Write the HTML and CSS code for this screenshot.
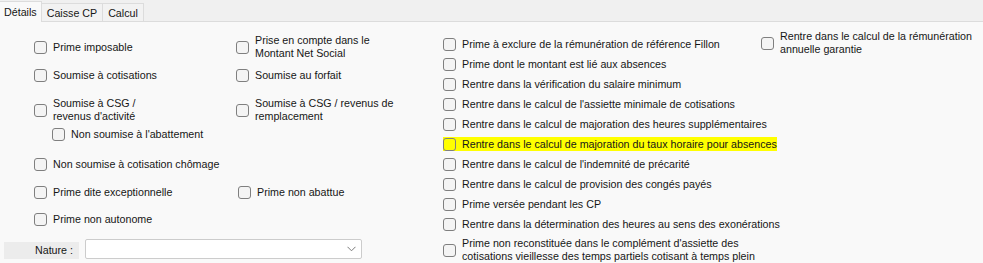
FILE: index.html
```html
<!DOCTYPE html>
<html lang="fr">
  <head>
    <meta charset="UTF-8" />
    <title>Rubrique - Détails</title>
    <link rel="stylesheet" href="styles.css">
  </head>
  <body>
    <div class="tabs">
      <div class="tab active">Détails</div>
      <div class="tab">Caisse CP</div>
      <div class="tab">Calcul</div>
    </div>

    <div class="panel">
      <div class="left">
        <div class="row">
          <label class="check"><span class="box"></span><span>Prime imposable</span></label>
          <label class="check"><span class="box"></span><span>Prise en compte dans le<br>Montant Net Social</span></label>
        </div>
        <div class="row tight">
          <label class="check"><span class="box"></span><span>Soumise à cotisations</span></label>
          <label class="check"><span class="box"></span><span>Soumise au forfait</span></label>
        </div>
        <div class="row wide">
          <label class="check"><span class="box"></span><span>Soumise à CSG /<br>revenus d'activité</span></label>
          <label class="check"><span class="box"></span><span>Soumise à CSG / revenus de<br>remplacement</span></label>
        </div>
        <div class="row sub">
          <label class="check indent"><span class="box"></span><span>Non soumise à l'abattement</span></label>
        </div>
        <div class="row loose">
          <label class="check"><span class="box"></span><span>Non soumise à cotisation chômage</span></label>
        </div>
        <div class="row">
          <label class="check"><span class="box"></span><span>Prime dite exceptionnelle</span></label>
          <label class="check shift"><span class="box"></span><span>Prime non abattue</span></label>
        </div>
        <div class="row close">
          <label class="check"><span class="box"></span><span>Prime non autonome</span></label>
        </div>

        <div class="nature">
          <span class="nature-label">Nature :</span>
          <div class="select">
            <svg width="9" height="6" viewBox="0 0 9 6"><path d="M0.5 0.8 L4.5 4.8 L8.5 0.8" fill="none" stroke="#7a7a7a" stroke-width="1"/></svg>
          </div>
        </div>
      </div>

      <div class="middle">
        <label class="check"><span class="box"></span><span>Prime à exclure de la rémunération de référence Fillon</span></label>
        <label class="check"><span class="box"></span><span>Prime dont le montant est lié aux absences</span></label>
        <label class="check"><span class="box"></span><span>Rentre dans la vérification du salaire minimum</span></label>
        <label class="check"><span class="box"></span><span>Rentre dans le calcul de l'assiette minimale de cotisations</span></label>
        <label class="check"><span class="box"></span><span>Rentre dans le calcul de majoration des heures supplémentaires</span></label>
        <label class="check marked"><span class="box"></span><span>Rentre dans le calcul de majoration du taux horaire pour absences</span></label>
        <label class="check"><span class="box"></span><span>Rentre dans le calcul de l'indemnité de précarité</span></label>
        <label class="check"><span class="box"></span><span>Rentre dans le calcul de provision des congés payés</span></label>
        <label class="check"><span class="box"></span><span>Prime versée pendant les CP</span></label>
        <label class="check"><span class="box"></span><span>Rentre dans la détermination des heures au sens des exonérations</span></label>
        <label class="check"><span class="box"></span><span>Prime non reconstituée dans le complément d'assiette des<br>cotisations vieillesse des temps partiels cotisant à temps plein</span></label>
      </div>

      <div class="right">
        <label class="check"><span class="box"></span><span>Rentre dans le calcul de la rémunération<br>annuelle garantie</span></label>
      </div>
    </div>
  </body>
</html>
```

FILE: styles.css
```css
body {
  margin: 0;
  font-family: "Liberation Sans", Arial, sans-serif;
  font-size: 10.7px;
  line-height: 13px;
  color: #161616;
  background-color: #f9f9f9;
}
.tabs {
  display: flex;
  height: 22px;
  box-sizing: border-box;
  background-color: #f0f0f0;
  border-bottom: 1px solid #dcdcdc;
}
.tab {
  margin-top: 3px;
  padding: 0 5px;
  line-height: 18px;
  background-color: #f2f2f2;
  border-top: 1px solid #dcdcdc;
  border-right: 1px solid #dcdcdc;
}
.tab.active {
  margin-top: 1px;
  margin-bottom: -1px;
  padding: 0 4px;
  line-height: 21px;
  background-color: #f9f9f9;
}
.panel {
  display: flex;
}
.left {
  width: 439px;
  padding: 12px 0 0 4px;
  display: flex;
  flex-direction: column;
}
.row {
  display: grid;
  grid-template-columns: 202px 1fr;
  align-items: center;
  padding-left: 30px;
  margin-top: 14px;
}
.row:first-child {
  margin-top: 0;
}
.row.tight {
  margin-top: 8px;
}
.row.wide {
  margin-top: 15px;
}
.row.sub {
  margin-top: 4px;
}
.row.loose {
  margin-top: 16px;
}
.row.close {
  margin-top: 13px;
}
.check {
  display: flex;
  align-items: center;
  gap: 6px;
  min-height: 14px;
  white-space: nowrap;
}
.check.indent {
  margin-left: 18px;
}
.check.shift {
  margin-left: 2px;
}
.box {
  flex: none;
  width: 13px;
  height: 13px;
  box-sizing: border-box;
  border: 1px solid #7f7f7f;
  border-radius: 3px;
  background-color: #f4f4f4;
}
.check.marked {
  align-self: flex-start;
  background-color: #ffff00;
}
.check.marked .box {
  background-color: #ffff00;
}
.nature {
  display: flex;
  align-items: center;
  gap: 6px;
  margin-top: 13px;
}
.nature-label {
  width: 75px;
  height: 17px;
  line-height: 17px;
  margin-top: 3px;
  box-sizing: border-box;
  padding-right: 6px;
  text-align: right;
  background-color: #ececec;
}
.select {
  width: 277px;
  height: 20px;
  box-sizing: border-box;
  border: 1px solid #cccccc;
  border-radius: 2px;
  background-color: #ffffff;
  display: flex;
  align-items: center;
  justify-content: flex-end;
  padding-right: 5px;
}
.middle {
  width: 318px;
  padding-top: 15px;
  display: flex;
  flex-direction: column;
  gap: 6px;
}
.right {
  padding-top: 8px;
}
```
